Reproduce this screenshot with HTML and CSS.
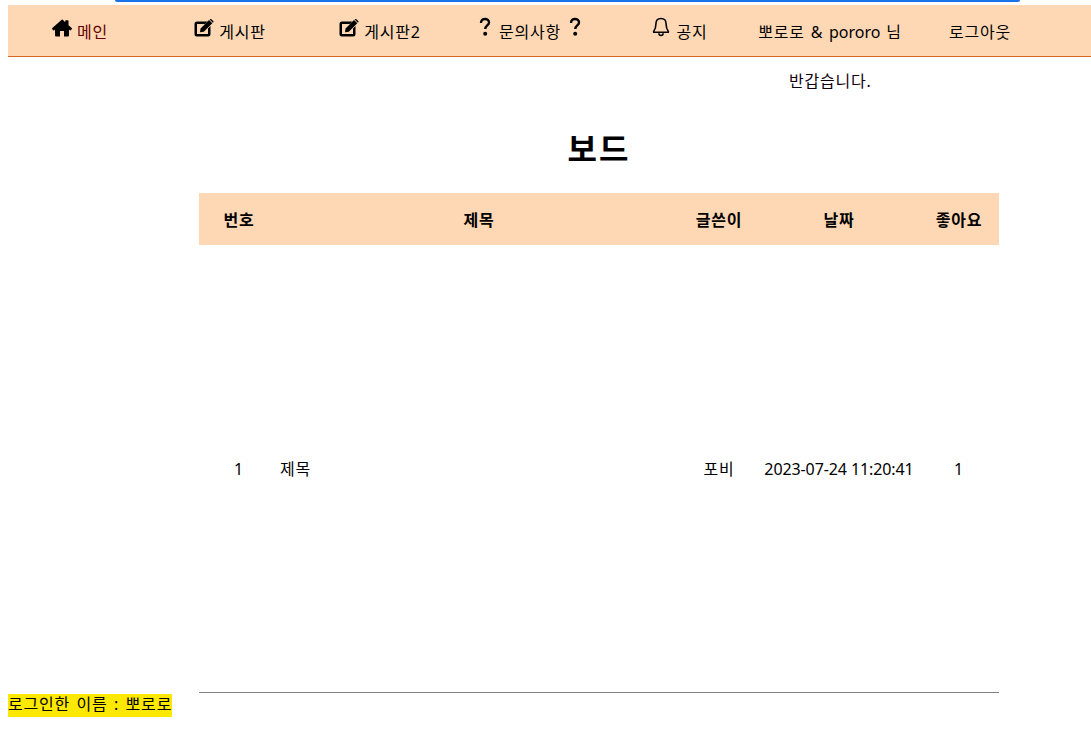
FILE: index.html
```html
<!DOCTYPE html>
<html lang="ko">
<head>
<meta charset="utf-8">
<title>보드</title>
<link rel="stylesheet" href="styles.css">
</head>
<body>
<div class="topbar"></div>
<nav class="nav">
  <a class="nav-item"><svg class="icon" viewBox="0 0 20 18"><path d="M10 .6 .3 9c-.4.4-.3.9 0 1.200l.9 1c.3.300.7.300 1 0L3 10.500V16.500c0 .5.400.9.900.9H8v-5.400h4v5.400h4.100c.5 0 .9-.4.900-.9V10.500l.8.700c.3.300.7.300 1 0l.9-1c.3-.3.4-.8 0-1.200L16.500 6.200V2c0-.4-.3-.7-.7-.7h-1.900c-.4 0-.7.300-.7.700v1.200L11 1c-.6-.5-1.400-.5-1 -.4z" fill="#000"/></svg><span class="label red">메인</span></a>
  <a class="nav-item"><svg class="icon" viewBox="0 0 20 18"><path d="M14 9.500V15H3V5h8l2.500-2.500H3A2.500 2.500 0 0 0 .5 5V15A2.500 2.500 0 0 0 3 17.500H14A2.500 2.500 0 0 0 16.500 15V7z" fill="#000"/><path d="M6.500 9.500 15 1l3.300 3.300-8.500 8.500-3.800.5zM16 .300a1 1 0 0 1 1.400 0l1.800 1.800a1 1 0 0 1 0 1.400l-.3.300L15.600.6z" fill="#000"/></svg><span class="label">게시판</span></a>
  <a class="nav-item"><svg class="icon" viewBox="0 0 20 18"><path d="M14 9.500V15H3V5h8l2.500-2.500H3A2.500 2.500 0 0 0 .5 5V15A2.500 2.500 0 0 0 3 17.500H14A2.500 2.500 0 0 0 16.500 15V7z" fill="#000"/><path d="M6.500 9.500 15 1l3.300 3.300-8.500 8.500-3.800.5zM16 .300a1 1 0 0 1 1.400 0l1.800 1.800a1 1 0 0 1 0 1.400l-.3.300L15.600.6z" fill="#000"/></svg><span class="label">게시판2</span></a>
  <a class="nav-item"><svg class="q" viewBox="0 0 12 20"><path d="M2 6C2 3.200 3.800 2 6 2s4 1.300 4 3.500c0 3-3.700 3-3.700 6.500" fill="none" stroke="#000" stroke-width="2.400"/><circle cx="6.200" cy="16.800" r="2" fill="#000"/></svg><span class="label">문의사항</span><svg class="q" viewBox="0 0 12 20"><path d="M2 6C2 3.200 3.800 2 6 2s4 1.300 4 3.500c0 3-3.700 3-3.700 6.500" fill="none" stroke="#000" stroke-width="2.400"/><circle cx="6.200" cy="16.800" r="2" fill="#000"/></svg></a>
  <a class="nav-item"><svg class="bell" viewBox="0 0 16 19"><path d="M8 1.500C5 1.500 3.200 3.500 3.200 6.500c0 4-1 5.700-2.200 7.200v.8h14v-.8c-1.200-1.500-2.200-3.200-2.200-7.200 0-3-1.800-5-4.800-5z" fill="none" stroke="#000" stroke-width="1.500" stroke-linejoin="round"/><path d="M6 15.500c0 1.300.9 2 2 2s2-.7 2-2" fill="none" stroke="#000" stroke-width="1.500"/></svg><span class="label">공지</span></a>
  <a class="nav-item"><span class="label user">뽀로로 &amp; <span class="latin">pororo</span> 님</span></a>
  <a class="nav-item"><span class="label">로그아웃</span></a>
</nav>
<p class="greeting">반갑습니다.</p>
<main class="board">
  <h1 class="title">보드</h1>
  <table class="list">
    <colgroup><col class="c80"><col class="c400"><col class="c80"><col class="c160"><col class="c80"></colgroup>
    <thead>
      <tr><th>번호</th><th>제목</th><th>글쓴이</th><th>날짜</th><th>좋아요</th></tr>
    </thead>
    <tbody>
      <tr><td>1</td><td class="left">제목</td><td>포비</td><td class="date">2023-07-24 11:20:41</td><td>1</td></tr>
    </tbody>
  </table>
  <hr class="rule">
</main>
<div class="login"><span class="mark">로그인한 이름 : 뽀로로</span></div>
</body>
</html>
```
FILE: styles.css
```css
* { box-sizing: border-box; }
html, body { margin: 0; padding: 0; }
body {
  background: #fff;
  color: #000;
  font-family: "Noto Sans", "Noto Sans CJK KR", sans-serif;
  font-size: 16px;
  letter-spacing: .8px;
  word-spacing: 1.5px;
  padding: 5px 0 0 8px;
  overflow: hidden;
  height: 756px;
}
.latin { letter-spacing: 0; word-spacing: 0; }
.date { letter-spacing: -.1px; word-spacing: 0; }
.topbar {
  position: absolute;
  top: 0;
  left: 115px;
  width: 905px;
  height: 2px;
  background: #1a73e8;
  border-radius: 0 0 8px 8px;
}
.nav {
  display: flex;
  height: 52px;
  background: #fed8b5;
  border-bottom: 1px solid #d2691e;
}
.nav-item {
  flex: 0 0 150px;
  display: flex;
  align-items: center;
  justify-content: center;
  gap: 5px;
  position: relative;
  left: -3px;
  line-height: 24px;
  top: -1px;
}
.label { position: relative; top: 2px; }
.user { word-spacing: .8px; }
.red { color: #600; }
.icon { width: 20px; height: 18px; position: relative; top: -2px; }
.q { width: 12px; height: 20px; position: relative; top: -3px; margin: 0 3px; }
.bell { width: 18px; height: 20px; position: relative; top: -3px; margin-right: 1px; }
.greeting {
  margin: 12px 0 0;
  padding-left: 781px;
  height: 24px;
  line-height: 24px;
  color: #100010;
}
.board { width: 800px; margin-left: 191px; }
.title {
  margin: 0;
  padding-top: 32px;
  height: 100px;
  line-height: 48px;
  font-size: 32px;
  font-weight: 700;
  letter-spacing: 2px;
  text-align: center;
}
.list {
  width: 800px;
  table-layout: fixed;
  border-collapse: collapse;
}
.c80 { width: 80px; }
.c160 { width: 160px; }
.c400 { width: 400px; }
.list th {
  height: 52px;
  padding: 0;
  background: #fed8b5;
  font-weight: 700;
  text-align: center;
}
.list td {
  height: 447px;
  padding: 0;
  text-align: center;
  line-height: 24px;
}
.list td.left { text-align: left; padding-left: 1px; }
.rule {
  margin: 0;
  height: 1px;
  border: 0;
  background: #808080;
}
.login {
  display: flex;
  margin-top: 1px;
  height: 24px;
}
.mark {
  height: 23px;
  line-height: 20px;
  background: #fde800;
}
```
